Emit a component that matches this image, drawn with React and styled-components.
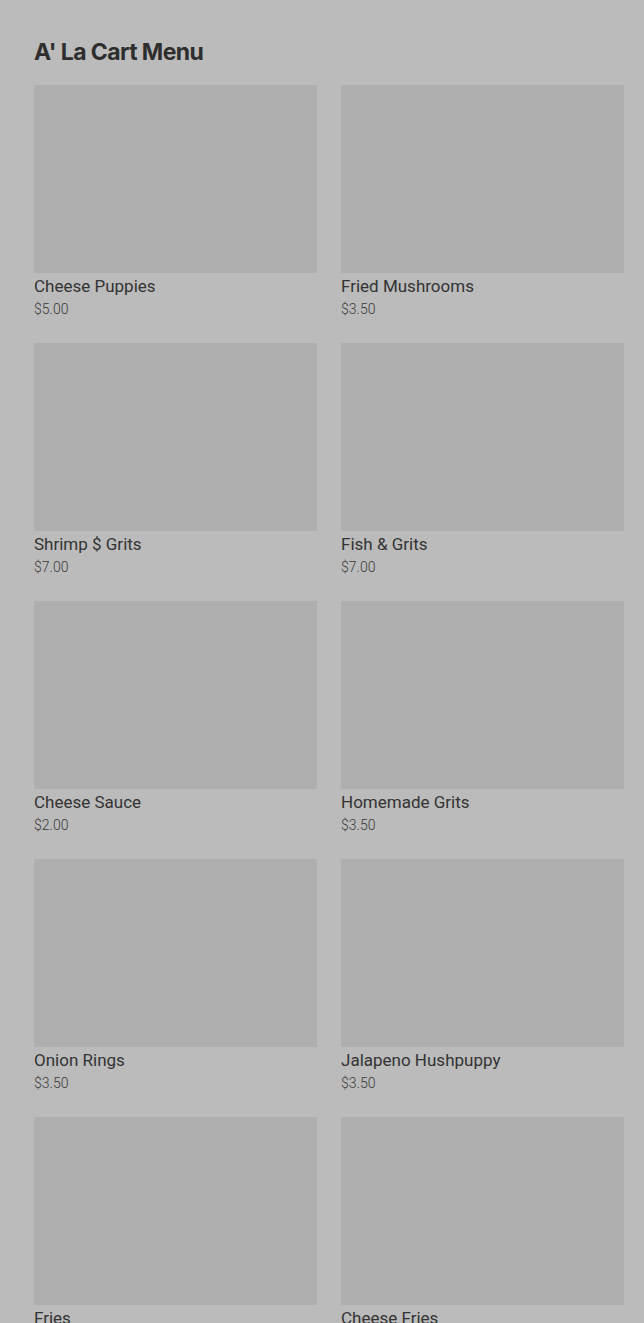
import React from "react";
import styled, { createGlobalStyle } from "styled-components";

const Global = createGlobalStyle`
  html, body { margin: 0; padding: 0; background: #bbbbbb; }
  body { font-family: Roboto, "Noto Sans", sans-serif; }
`;

const Page = styled.div`
  padding: 36px 20px 0 34px;
  min-height: 1323px;
  box-sizing: border-box;
  background: #bbbbbb;
`;

const Title = styled.h1`
  margin: 0 0 17px 0;
  font-family: Inter, "Noto Sans", sans-serif;
  font-weight: 700;
  font-size: 23px;
  line-height: 32px;
  letter-spacing: -0.6px;
  color: #2e2e2e;
`;

const Grid = styled.div`
  display: grid;
  grid-template-columns: 283px 283px;
  column-gap: 24px;
  row-gap: 25px;
`;

const Card = styled.div`
  display: flex;
  flex-direction: column;
`;

const Thumb = styled.div`
  height: 188px;
  background: #afafaf;
`;

const Name = styled.div`
  margin-top: 3px;
  font-size: 17px;
  line-height: 21px;
  color: #333333;
`;

const Price = styled.div`
  margin-top: 3px;
  font-size: 14px;
  line-height: 18px;
  font-weight: 300;
  color: #3a3a3a;
`;

const items = [
  ["Cheese Puppies", "$5.00"],
  ["Fried Mushrooms", "$3.50"],
  ["Shrimp $ Grits", "$7.00"],
  ["Fish & Grits", "$7.00"],
  ["Cheese Sauce", "$2.00"],
  ["Homemade Grits", "$3.50"],
  ["Onion Rings", "$3.50"],
  ["Jalapeno Hushpuppy", "$3.50"],
  ["Fries", "$3.00"],
  ["Cheese Fries", "$4.00"],
];

export default function App() {
  return (
    <>
      <Global />
      <Page>
        <Title>A' La Cart Menu</Title>
        <Grid>
          {items.map(([n, p]) => (
            <Card key={n}>
              <Thumb />
              <Name>{n}</Name>
              <Price>{p}</Price>
            </Card>
          ))}
        </Grid>
      </Page>
    </>
  );
}
